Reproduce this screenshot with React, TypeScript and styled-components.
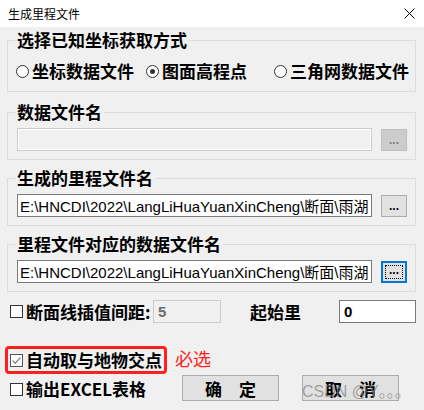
import React from 'react';
import styled, { createGlobalStyle } from 'styled-components';

const CJK = `"Noto Sans CJK SC", "Liberation Sans", sans-serif`;
const PATH_FONT = `"Liberation Sans", "Noto Sans CJK SC", sans-serif`;

const GlobalStyle = createGlobalStyle`
  html, body {
    margin: 0;
    padding: 0;
    background: #f0f0f0;
  }
  * {
    box-sizing: border-box;
  }
`;

const Window = styled.div`
  position: relative;
  width: 424px;
  height: 410px;
  overflow: hidden;
  background: #f0f0f0;
  font-family: ${CJK};
  color: #000;
`;

const TitleBar = styled.div`
  display: flex;
  align-items: center;
  justify-content: space-between;
  height: 27px;
  padding: 0 9px 0 8px;
  background: #fff;
  font-size: 12px;
`;

const Body = styled.div`
  padding: 3px 8px 0 7px;
`;

const Group = styled.fieldset<{ $mt: number }>`
  margin: ${(p) => p.$mt}px 0 0;
  padding: 0;
  min-width: 0;
  border: 1px solid #dcdcdc;
`;

const Legend = styled.legend`
  margin-left: 7px;
  padding: 0 2px;
  font-size: 17px;
  font-weight: 700;
  line-height: 20px;
`;

const RadioRow = styled.div`
  display: flex;
  align-items: center;
  height: 20px;
  margin: 11px 0 10px 8px;
`;

const RadioItem = styled.label<{ $width?: number }>`
  display: flex;
  align-items: center;
  gap: 3px;
  width: ${(p) => (p.$width ? `${p.$width}px` : 'auto')};
  font-size: 17px;
  font-weight: 700;
  line-height: 20px;
  white-space: nowrap;
`;

const RadioDot = styled.span<{ $on?: boolean }>`
  position: relative;
  flex: none;
  width: 13px;
  height: 13px;
  border: 1px solid #333;
  border-radius: 50%;
  background: #fff;
  &::after {
    content: '';
    display: ${(p) => (p.$on ? 'block' : 'none')};
    position: absolute;
    left: 3px;
    top: 3px;
    width: 5px;
    height: 5px;
    border-radius: 50%;
    background: #333;
  }
`;

const FileRow = styled.div`
  display: flex;
  align-items: center;
  gap: 9px;
  padding: 6px 8px 8px 9px;
`;

const PathInput = styled.input<{ $disabled?: boolean }>`
  flex: 1;
  min-width: 0;
  height: 23px;
  padding: 0 2px;
  margin: 0;
  border: 1px solid ${(p) => (p.$disabled ? '#cccccc' : '#7a7a7a')};
  box-shadow: ${(p) => (p.$disabled ? 'inset 0 0 0 1px #fff' : 'none')};
  background: ${(p) => (p.$disabled ? '#f0f0f0' : '#fff')};
  font-family: ${PATH_FONT};
  font-size: 15px;
  color: #000;
  outline: none;
`;

const BrowseButton = styled.button<{ $disabled?: boolean; $focused?: boolean }>`
  display: flex;
  align-items: center;
  justify-content: center;
  flex: none;
  width: 26px;
  height: 22px;
  padding: 0;
  margin: 0;
  border: ${(p) => (p.$focused ? '2px solid #0078d7' : `1px solid ${p.$disabled ? '#bfbfbf' : '#adadad'}`)};
  background: ${(p) => (p.$disabled ? '#cccccc' : '#e1e1e1')};
  color: ${(p) => (p.$disabled ? '#7a7a7a' : '#000')};
  font-family: ${PATH_FONT};
  font-size: 12px;
  font-weight: 700;
  line-height: 1;
`;

const FocusRing = styled.span`
  display: flex;
  align-items: flex-end;
  justify-content: center;
  width: 18px;
  height: 14px;
  padding-bottom: 2px;
  border: 1px dotted #000;
`;

const OptionRow = styled.div`
  display: flex;
  align-items: center;
  height: 23px;
  margin-top: 8px;
  padding-left: 3px;
`;

const CheckItem = styled.label<{ $width?: number }>`
  display: flex;
  align-items: center;
  gap: 3px;
  width: ${(p) => (p.$width ? `${p.$width}px` : 'auto')};
  font-size: 17px;
  font-weight: 700;
  line-height: 20px;
  white-space: nowrap;
`;

const Box = styled.span<{ $checked?: boolean }>`
  display: flex;
  align-items: center;
  justify-content: center;
  flex: none;
  width: 13px;
  height: 13px;
  border: 1px solid ${(p) => (p.$checked ? '#555' : '#333')};
  background: #fff;
`;

const FieldLabel = styled.span`
  margin-left: 29px;
  font-size: 17px;
  font-weight: 700;
  line-height: 20px;
`;

const SmallInput = styled.input<{ $width: number; $disabled?: boolean }>`
  width: ${(p) => p.$width}px;
  height: 23px;
  margin: 0;
  margin-left: ${(p) => (p.$disabled ? '0' : 'auto')};
  padding: 0 4px;
  border: 1px solid ${(p) => (p.$disabled ? '#cccccc' : '#7a7a7a')};
  background: ${(p) => (p.$disabled ? '#f0f0f0' : '#fff')};
  color: ${(p) => (p.$disabled ? '#6d6d6d' : '#000')};
  font-family: ${PATH_FONT};
  font-size: 15px;
  font-weight: 700;
  outline: none;
`;

const Lower = styled.div`
  display: flex;
  margin: 23px 0 0 -2px;
`;

const LeftCol = styled.div`
  display: flex;
  flex-direction: column;
  width: 162px;
`;

const RedBox = styled.div`
  display: flex;
  align-items: center;
  height: 28px;
  padding-left: 2px;
  border: 3px solid #ff2121;
  border-radius: 4px;
`;

const PlainRow = styled.div`
  display: flex;
  align-items: center;
  height: 14px;
  margin-top: 8px;
  padding-left: 5px;
`;

const RightCol = styled.div`
  display: flex;
  flex-direction: column;
  margin-left: 8px;
`;

const Must = styled.span`
  margin-top: 2px;
  font-size: 18px;
  line-height: 20px;
  color: #ff2020;
`;

const ButtonRow = styled.div`
  display: flex;
  gap: 23px;
  margin-top: 7px;
  padding-left: 7px;
`;

const DialogButton = styled.button`
  width: 97px;
  height: 26px;
  padding: 0;
  margin: 0;
  border: 1px solid #adadad;
  background: #e1e1e1;
  font-family: ${CJK};
  font-size: 17px;
  font-weight: 700;
  line-height: 1;
  color: #000;
`;

const Watermark = styled.div`
  position: absolute;
  left: 302px;
  top: 382px;
  font-family: ${PATH_FONT};
  font-size: 16px;
  line-height: 20px;
  color: rgba(128, 128, 128, 0.7);
  white-space: nowrap;
  pointer-events: none;
`;

const CloseIcon = () => (
  <svg width="11" height="11" viewBox="0 0 11 11">
    <path d="M0.5 0.5 L10.5 10.5 M10.5 0.5 L0.5 10.5" stroke="#000" strokeWidth="1" />
  </svg>
);

const Check = ({ checked }: { checked?: boolean }) => (
  <Box $checked={checked}>
    {checked && (
      <svg width="11" height="11" viewBox="0 0 11 11">
        <path d="M1.5 5.5 L4.2 8.2 L9.5 2.5" fill="none" stroke="#8a8a8a" strokeWidth="1.3" />
      </svg>
    )}
  </Box>
);

const files = [
  { title: '数据文件名', value: '', disabled: true, mt: 10 },
  {
    title: '生成的里程文件名',
    value: 'E:\\HNCDI\\2022\\LangLiHuaYuanXinCheng\\断面\\雨湖2022.txt',
    mt: 8,
  },
  {
    title: '里程文件对应的数据文件名',
    value: 'E:\\HNCDI\\2022\\LangLiHuaYuanXinCheng\\断面\\雨湖2022.dat',
    focused: true,
    mt: 8,
  },
];

const App = () => {
  return (
    <>
      <GlobalStyle />
      <Window>
        <TitleBar>
          <span>生成里程文件</span>
          <CloseIcon />
        </TitleBar>

        <Body>
          <Group $mt={0}>
            <Legend>选择已知坐标获取方式</Legend>
            <RadioRow>
              <RadioItem $width={130}>
                <RadioDot />
                坐标数据文件
              </RadioItem>
              <RadioItem $width={128}>
                <RadioDot $on />
                图面高程点
              </RadioItem>
              <RadioItem>
                <RadioDot />
                三角网数据文件
              </RadioItem>
            </RadioRow>
          </Group>

          {files.map((f) => (
            <Group $mt={f.mt} key={f.title}>
              <Legend>{f.title}</Legend>
              <FileRow>
                <PathInput $disabled={f.disabled} value={f.value} readOnly />
                <BrowseButton $disabled={f.disabled} $focused={f.focused}>
                  {f.focused ? <FocusRing>...</FocusRing> : '...'}
                </BrowseButton>
              </FileRow>
            </Group>
          ))}

          <OptionRow>
            <CheckItem $width={143}>
              <Check />
              断面线插值间距:
            </CheckItem>
            <SmallInput $width={68} $disabled value="5" readOnly />
            <FieldLabel>起始里</FieldLabel>
            <SmallInput $width={77} value="0" readOnly />
          </OptionRow>

          <Lower>
            <LeftCol>
              <RedBox>
                <CheckItem>
                  <Check checked />
                  自动取与地物交点
                </CheckItem>
              </RedBox>
              <PlainRow>
                <CheckItem>
                  <Check />
                  输出EXCEL表格
                </CheckItem>
              </PlainRow>
            </LeftCol>
            <RightCol>
              <Must>必选</Must>
              <ButtonRow>
                <DialogButton>确　定</DialogButton>
                <DialogButton>取　消</DialogButton>
              </ButtonRow>
            </RightCol>
          </Lower>
        </Body>

        <Watermark>CSDN @Y。。。</Watermark>
      </Window>
    </>
  );
};

export default App;
